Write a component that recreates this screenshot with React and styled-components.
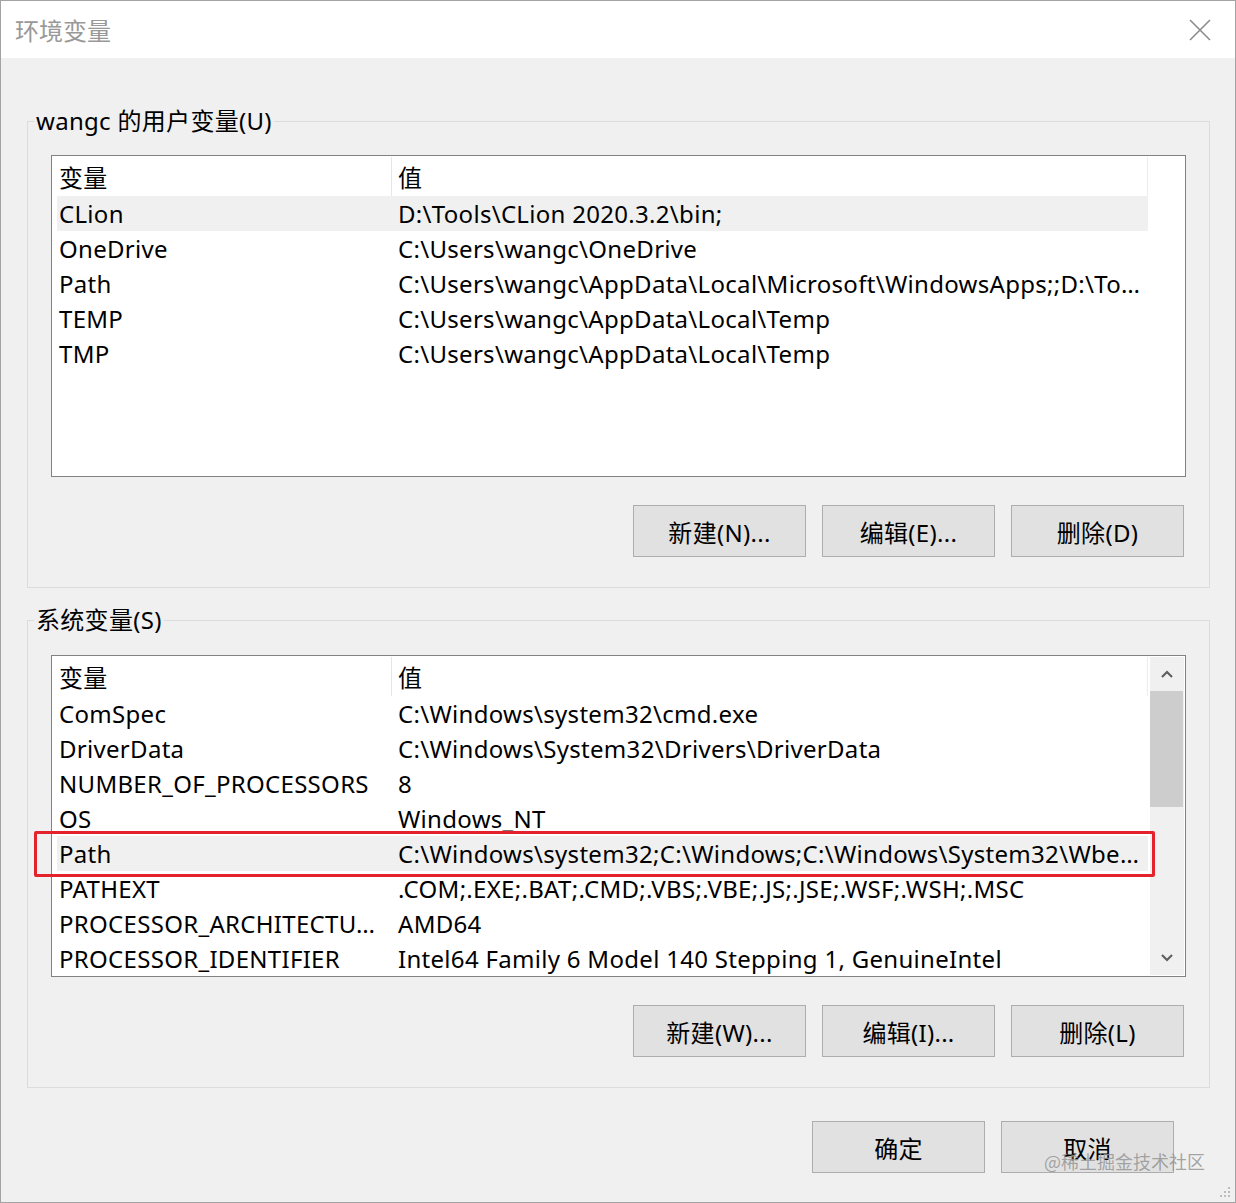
import React from "react";
import styled, { createGlobalStyle } from "styled-components";

const GlobalStyle = createGlobalStyle`
  body {
    margin: 0;
    background: #ffffff;
    font-family: "Noto Sans", "Noto Sans CJK SC", sans-serif;
  }
`;

const FONT = `"Noto Sans", "Noto Sans CJK SC", sans-serif`;

const Window = styled.div`
  width: 1236px;
  height: 1203px;
  box-sizing: border-box;
  border: 1px solid #a3a3a3;
  background: #f0f0f0;
  display: flex;
  flex-direction: column;
  position: relative;
  overflow: hidden;
`;

const TitleBar = styled.div`
  height: 57px;
  background: #ffffff;
  display: flex;
  align-items: center;
  justify-content: space-between;
  padding: 0 24px 0 14px;
  font-family: ${FONT};
  font-size: 24px;
  color: #999999;
`;

const Body = styled.div`
  flex: 1;
  display: flex;
  flex-direction: column;
  padding: 0 25px 0 26px;
`;

const Group = styled.fieldset`
  margin: ${(p) => p.$top}px 0 0 0;
  padding: 0 0 30px 0;
  min-width: 0;
  border: 1px solid #dcdcdc;
  display: flex;
  flex-direction: column;
`;

const Legend = styled.legend`
  margin-left: 6px;
  padding: 0 2px;
  font-family: ${FONT};
  font-size: 24px;
  letter-spacing: 0.3px;
  line-height: 32px;
  color: #000;
`;

const ListBox = styled.div`
  position: relative;
  margin: ${(p) => p.$top}px 23px 0 23px;
  height: 322px;
  box-sizing: border-box;
  border: 1px solid #828282;
  background: #fff;
  display: flex;
  overflow: hidden;
`;

const ListInner = styled.div`
  flex: 1;
  padding: 1px 0 0 5px;
  display: flex;
  flex-direction: column;
  min-width: 0;
`;

const Row = styled.div`
  display: flex;
  width: 1091px;
  height: ${(p) => (p.$header ? 39 : 35)}px;
  flex-shrink: 0;
  align-items: center;
  background: ${(p) => (p.$selected ? "#f0f0f0" : "transparent")};
  border-right: ${(p) => (p.$header ? "1px solid #ececec" : "none")};
  font-family: ${FONT};
  font-size: 24px;
  letter-spacing: 0.3px;
  color: #000;
  white-space: nowrap;
  box-sizing: border-box;
`;

const NameCell = styled.div`
  width: 335px;
  height: 100%;
  display: flex;
  align-items: center;
  padding-left: 2px;
  box-sizing: border-box;
  border-right: ${(p) => (p.$header ? "1px solid #e6e6e6" : "1px solid transparent")};
  overflow: hidden;
`;

const ValueCell = styled.div`
  flex: 1;
  padding-left: 6px;
  overflow: hidden;
`;

const ScrollBar = styled.div`
  width: 34px;
  margin: 1px 1px 1px 0;
  background: #f0f0f0;
  display: flex;
  flex-direction: column;
`;

const ScrollArrow = styled.div`
  height: 34px;
  display: flex;
  align-items: center;
  justify-content: center;
`;

const Track = styled.div`
  flex: 1;
  display: flex;
  flex-direction: column;
`;

const Thumb = styled.div`
  height: 116px;
  margin: 0 1px 0 0;
  background: #cdcdcd;
`;

const Highlight = styled.div`
  position: absolute;
  left: 33px;
  top: 830px;
  width: 1121px;
  height: 46px;
  box-sizing: border-box;
  border: 3px solid #e3222b;
  border-radius: 2px;
  pointer-events: none;
`;

const ButtonRow = styled.div`
  display: flex;
  justify-content: flex-end;
  gap: 16px;
  margin: ${(p) => p.$top}px ${(p) => p.$right}px 0 0;
`;

const Button = styled.div`
  width: 173px;
  height: 52px;
  box-sizing: border-box;
  border: 1px solid #adadad;
  background: #e1e1e1;
  display: flex;
  align-items: center;
  justify-content: center;
  font-family: ${FONT};
  font-size: 24px;
  letter-spacing: 0.3px;
  color: #000;
`;

const Watermark = styled.div`
  position: absolute;
  right: 30px;
  bottom: 28px;
  font-family: "Noto Sans CJK SC", sans-serif;
  font-size: 18px;
  color: rgba(150, 150, 150, 0.85);
`;

const Grip = styled.svg`
  position: absolute;
  right: 4px;
  bottom: 4px;
`;

function CloseIcon() {
  return (
    <svg width="22" height="22" viewBox="0 0 22 22">
      <path d="M1 1 L21 21 M21 1 L1 21" stroke="#8c8c8c" strokeWidth="1.6" />
    </svg>
  );
}

function Chevron({ up }) {
  return (
    <svg width="12" height="8" viewBox="0 0 12 8">
      <path
        d={up ? "M1 7 L6 2 L11 7" : "M1 1 L6 6 L11 1"}
        fill="none"
        stroke="#606060"
        strokeWidth="2.2"
      />
    </svg>
  );
}

const userVars = [
  ["CLion", "D:\\Tools\\CLion 2020.3.2\\bin;"],
  ["OneDrive", "C:\\Users\\wangc\\OneDrive"],
  ["Path", "C:\\Users\\wangc\\AppData\\Local\\Microsoft\\WindowsApps;;D:\\To…"],
  ["TEMP", "C:\\Users\\wangc\\AppData\\Local\\Temp"],
  ["TMP", "C:\\Users\\wangc\\AppData\\Local\\Temp"],
];

const sysVars = [
  ["ComSpec", "C:\\Windows\\system32\\cmd.exe"],
  ["DriverData", "C:\\Windows\\System32\\Drivers\\DriverData"],
  ["NUMBER_OF_PROCESSORS", "8"],
  ["OS", "Windows_NT"],
  ["Path", "C:\\Windows\\system32;C:\\Windows;C:\\Windows\\System32\\Wbe…"],
  ["PATHEXT", ".COM;.EXE;.BAT;.CMD;.VBS;.VBE;.JS;.JSE;.WSF;.WSH;.MSC"],
  ["PROCESSOR_ARCHITECTU…", "AMD64"],
  ["PROCESSOR_IDENTIFIER", "Intel64 Family 6 Model 140 Stepping 1, GenuineIntel"],
];

function VarList({ rows, selected, top, scroll }) {
  return (
    <ListBox $top={top}>
      <ListInner>
        <Row $header>
          <NameCell $header>变量</NameCell>
          <ValueCell>值</ValueCell>
        </Row>
        {rows.map(([name, value], i) => (
          <Row key={name + i} $selected={i === selected}>
            <NameCell>{name}</NameCell>
            <ValueCell>{value}</ValueCell>
          </Row>
        ))}
      </ListInner>
      {scroll && (
        <ScrollBar>
          <ScrollArrow>
            <Chevron up />
          </ScrollArrow>
          <Track>
            <Thumb />
          </Track>
          <ScrollArrow>
            <Chevron />
          </ScrollArrow>
        </ScrollBar>
      )}
    </ListBox>
  );
}

export default function App() {
  return (
    <>
      <GlobalStyle />
      <Window>
        <TitleBar>
          <span>环境变量</span>
          <CloseIcon />
        </TitleBar>
        <Body>
          <Group $top={47}>
            <Legend>wangc 的用户变量(U)</Legend>
            <VarList rows={userVars} selected={0} top={18} />
            <ButtonRow $top={28} $right={25}>
              <Button>新建(N)...</Button>
              <Button>编辑(E)...</Button>
              <Button>删除(D)</Button>
            </ButtonRow>
          </Group>
          <Group $top={16}>
            <Legend>系统变量(S)</Legend>
            <VarList rows={sysVars} selected={4} top={19} scroll />
            <ButtonRow $top={28} $right={25}>
              <Button>新建(W)...</Button>
              <Button>编辑(I)...</Button>
              <Button>删除(L)</Button>
            </ButtonRow>
          </Group>
          <ButtonRow $top={33} $right={36}>
            <Button>确定</Button>
            <Button>取消</Button>
          </ButtonRow>
        </Body>
        <Highlight />
        <Watermark>@稀土掘金技术社区</Watermark>
        <Grip width="12" height="12" viewBox="0 0 12 12">
          <g fill="#bdbdbd">
            <rect x="9" y="1" width="2" height="2" />
            <rect x="5" y="5" width="2" height="2" />
            <rect x="9" y="5" width="2" height="2" />
            <rect x="1" y="9" width="2" height="2" />
            <rect x="5" y="9" width="2" height="2" />
            <rect x="9" y="9" width="2" height="2" />
          </g>
        </Grip>
      </Window>
    </>
  );
}
